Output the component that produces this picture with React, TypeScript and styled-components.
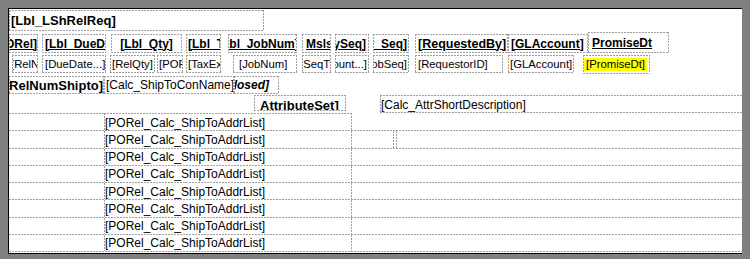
import React from "react";
import styled, { createGlobalStyle, css } from "styled-components";

const DASH = "#a0a0a0";
const H_DASH = `repeating-linear-gradient(90deg, ${DASH} 0 2px, transparent 2px 3px)`;
const V_DASH = `repeating-linear-gradient(180deg, ${DASH} 0 2px, transparent 2px 3px)`;

const dashed = (edges: string) => {
  const layers: string[] = [];
  if (edges.includes("t")) layers.push(`${H_DASH} left top / 100% 1px no-repeat border-box`);
  if (edges.includes("b")) layers.push(`${H_DASH} left bottom / 100% 1px no-repeat border-box`);
  if (edges.includes("l")) layers.push(`${V_DASH} left top / 1px 100% no-repeat border-box`);
  if (edges.includes("r")) layers.push(`${V_DASH} right top / 1px 100% no-repeat border-box`);
  const w = (e: string) => (edges.includes(e) ? "1px" : "0");
  return css`
    border-style: solid;
    border-color: transparent;
    border-width: ${w("t")} ${w("r")} ${w("b")} ${w("l")};
    background: ${layers.length ? layers.join(", ") : "none"};
  `;
};

const GlobalStyle = createGlobalStyle`
  html { background: #808080; }
  body {
    margin: 8px;
    background: #808080;
    font-family: "Liberation Sans", Arial, sans-serif;
  }
`;

const Canvas = styled.div`
  box-sizing: border-box;
  width: 736px;
  height: 246px;
  background: #ffffff;
  border-top: 1px solid #000;
  border-left: 1px solid #000;
  border-bottom: 1px solid #000;
  border-right: 1px dotted #000;
  box-shadow: 3px 3px 0 #000;
  display: flex;
  flex-direction: column;
  overflow: hidden;
`;

const Band = styled.div<{ $mt: number; $h: number; $align?: string }>`
  display: flex;
  flex: none;
  margin-top: ${(p) => p.$mt}px;
  height: ${(p) => p.$h}px;
  align-items: ${(p) => p.$align ?? "flex-start"};
`;

type Align = "start" | "center" | "end";
const justify: Record<Align, string> = { start: "flex-start", center: "center", end: "flex-end" };

interface CellProps {
  $w: number;
  $h?: number;
  $ml?: number;
  $align?: Align;
  $pl?: number;
  $pr?: number;
  $pt?: number;
  $top?: boolean;
  $size?: number;
}

const Cell = styled.div<CellProps>`
  box-sizing: border-box;
  flex: none;
  width: ${(p) => p.$w}px;
  height: ${(p) => p.$h ?? 18}px;
  margin-left: ${(p) => p.$ml ?? 0}px;
  ${dashed("tlbr")}
  display: flex;
  align-items: ${(p) => (p.$top ? "flex-start" : "center")};
  justify-content: ${(p) => justify[p.$align ?? "start"]};
  padding: ${(p) => p.$pt ?? 0}px ${(p) => p.$pr ?? 0}px 0 ${(p) => p.$pl ?? 0}px;
  overflow: hidden;
  white-space: nowrap;
  color: #000;
`;

const Txt = styled.span<{ $indent?: number }>`
  flex: none;
  margin-left: ${(p) => p.$indent ?? 0}px;
`;

const Title = styled(Cell)`
  font-size: 13px;
  font-weight: 700;
`;

const Label = styled(Cell)`
  font-size: ${(p) => p.$size ?? 12}px;
  font-weight: 700;
  & > span {
    text-decoration: underline;
  }
`;

const Field = styled(Cell)`
  font-size: ${(p) => p.$size ?? 11.3}px;
  font-weight: 400;
`;

const BoldField = styled(Cell)<{ $italic?: boolean }>`
  font-size: ${(p) => p.$size ?? 13}px;
  font-weight: 700;
  font-style: ${(p) => (p.$italic ? "italic" : "normal")};
`;

const Highlight = styled.span`
  flex: none;
  background: #ffff00;
  padding: 0 2px;
  line-height: 13px;
`;

const Detail = styled.div`
  display: flex;
  flex-direction: column;
  flex: none;
`;

const DetailRow = styled.div<{ $h: number }>`
  box-sizing: border-box;
  display: flex;
  flex: none;
  height: ${(p) => p.$h}px;
  ${dashed("b")}
`;

const Gutter = styled.div<{ $first?: boolean }>`
  box-sizing: border-box;
  flex: none;
  width: 95px;
  ${(p) => dashed(p.$first ? "t" : "")}
`;

const AddrCell = styled.div<{ $first?: boolean }>`
  box-sizing: border-box;
  flex: none;
  width: 248px;
  ${(p) => dashed(p.$first ? "tlr" : "lr")}
  display: flex;
  align-items: center;
  padding-top: 1px;
  font-size: 12px;
  color: #000;
  white-space: nowrap;
  overflow: hidden;
`;

const RowRest = styled.div`
  flex: 1;
  display: flex;
`;

const Marker = styled.div`
  box-sizing: border-box;
  flex: none;
  width: 4px;
  margin-left: 41px;
  ${dashed("lr")}
`;

interface Spec {
  text: string;
  w: number;
  ml?: number;
  h?: number;
  align?: Align;
  pl?: number;
  pr?: number;
  indent?: number;
  size?: number;
  mark?: boolean;
}

const headers: Spec[] = [
  { text: "[Lbl_PORel]", ml: 0, w: 29, align: "end", h: 19 },
  { text: "[Lbl_DueDate]", ml: 4, w: 64, pl: 2, h: 19 },
  { text: "[Lbl_Qty]", ml: 5, w: 71, align: "center", h: 19 },
  { text: "[Lbl_TaxExempt]", ml: 4, w: 35, pl: 1, h: 19 },
  { text: "[Lbl_JobNum]", ml: 7, w: 69, indent: -11, h: 19 },
  { text: "Msls", ml: 5, w: 29, pl: 3, h: 19 },
  { text: "[Lbl_AssySeq]", ml: 4, w: 34, align: "end", pr: 2, h: 19 },
  { text: "[Lbl_Opr_Seq]", ml: 4, w: 36, align: "end", pr: 1, h: 19 },
  { text: "[RequestedBy]", ml: 6, w: 93, pl: 2, h: 19, size: 12.5 },
  { text: "[GLAccount]", ml: 0, w: 80, pl: 2, h: 19 },
  { text: "PromiseDt", ml: 0, w: 81, pl: 3, h: 21 },
];

const fields: Spec[] = [
  { text: "[RelNum]", ml: 3, w: 26, indent: -2 },
  { text: "[DueDate...]", ml: 4, w: 64, pl: 2 },
  { text: "[RelQty]", ml: 4, w: 45, pl: 1 },
  { text: "[PORelTax]", ml: 2, w: 26, pl: 1 },
  { text: "[TaxExempt]", ml: 3, w: 35, pl: 1 },
  { text: "[JobNum]", ml: 12, w: 64, pl: 5 },
  { text: "[SeqType]", ml: 5, w: 29, indent: -3 },
  { text: "[Count...]", ml: 4, w: 34, align: "end", pr: 1 },
  { text: "[JobSeq]", ml: 4, w: 36, align: "end", pr: 1 },
  { text: "[RequestorID]", ml: 6, w: 88, pl: 2 },
  { text: "[GLAccount]", ml: 5, w: 66, pl: 1 },
  { text: "[PromiseDt]", ml: 9, w: 67, h: 19, mark: true },
];

const DETAIL_ROWS = 8;

export default function App() {
  return (
    <>
      <GlobalStyle />
      <Canvas>
        <Band $mt={1} $h={21}>
          <Title $w={255} $h={21} $pl={1}>
            <Txt>[Lbl_LShRelReq]</Txt>
          </Title>
        </Band>

        <Band $mt={1} $h={21} $align="flex-end">
          {headers.map((s, i) => (
            <Label
              key={i}
              $w={s.w}
              $h={s.h}
              $ml={s.ml}
              $align={s.align}
              $pl={s.pl}
              $pr={s.pr}
              $size={s.size}
            >
              <Txt $indent={s.indent}>{s.text}</Txt>
            </Label>
          ))}
        </Band>

        <Band $mt={2} $h={19}>
          {fields.map((s, i) => (
            <Field
              key={i}
              $w={s.w}
              $h={s.h}
              $ml={s.ml}
              $align={s.align}
              $pl={s.pl}
              $pr={s.pr}
            >
              {s.mark ? <Highlight>{s.text}</Highlight> : <Txt $indent={s.indent}>{s.text}</Txt>}
            </Field>
          ))}
        </Band>

        <Band $mt={2} $h={18}>
          <BoldField $w={95} $align="end">
            <Txt>[Lbl_RelNumShipto]</Txt>
          </BoldField>
          <Field $w={130} $pl={1} $size={12}>
            <Txt>[Calc_ShipToConName]</Txt>
          </Field>
          <BoldField $w={45} $align="end" $pr={9} $size={12} $italic>
            <Txt>[Lbl_Closed]</Txt>
          </BoldField>
        </Band>

        <Band $mt={1} $h={18}>
          <BoldField $w={92} $h={16} $ml={245} $pl={5} $pt={2} $top>
            <Txt>AttributeSet]</Txt>
          </BoldField>
          <Field $w={363} $h={18} $ml={34} $pt={2} $size={12}>
            <Txt>[Calc_AttrShortDescription]</Txt>
          </Field>
        </Band>

        <Detail>
          {Array.from({ length: DETAIL_ROWS }).map((_, i) => (
            <DetailRow key={i} $h={i === 0 ? 18.25 : 17.25}>
              <Gutter $first={i === 0} />
              <AddrCell $first={i === 0}>[PORel_Calc_ShipToAddrList]</AddrCell>
              <RowRest>{i === 1 && <Marker />}</RowRest>
            </DetailRow>
          ))}
        </Detail>
      </Canvas>
    </>
  );
}
